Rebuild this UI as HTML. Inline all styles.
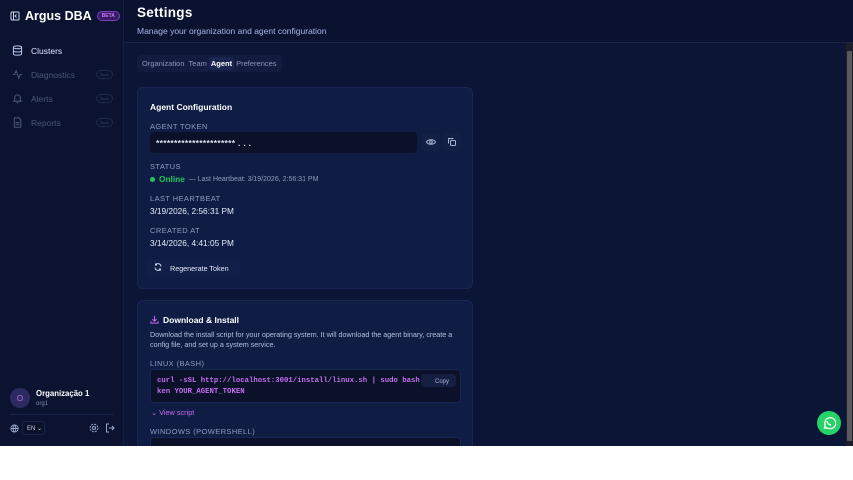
<!DOCTYPE html>
<html><head><meta charset="utf-8"><style>
*{box-sizing:border-box;margin:0;padding:0}
body{width:853px;height:480px;background:#fff;font-family:"Liberation Sans",sans-serif;overflow:hidden;position:relative}
.app{position:absolute;left:0;top:0;width:853px;height:446px;background:#0b1535;overflow:hidden}
.side{position:absolute;left:0;top:0;width:124px;height:446px;background:#0b1330;border-right:1px solid #141f42}
.logo{position:absolute;left:10px;top:9px;display:flex;align-items:center;gap:5px;color:#fff;font-weight:bold;font-size:12.5px;white-space:nowrap}
.beta{font-size:5px;color:#c07af0;border:1px solid #7b3fc0;background:#3a1a66;border-radius:6px;padding:1px 4px}
.nav{position:absolute;left:12px;display:flex;align-items:center;gap:8px;font-size:8.5px;width:100px}
.soon{position:absolute;left:84px;font-size:4px;color:#3f4a6a;border:1px solid #1f2a4a;border-radius:5px;padding:1px 3px}
.main{position:absolute;left:124px;top:0;right:0;height:446px}
.hdr{height:43px;background:#0a1230;border-bottom:1px solid #18244a;padding:5px 13px}
.hdr h1{color:#fff;font-size:13.5px;font-weight:bold;letter-spacing:.3px}
.hdr p{color:#a9b6e6;font-size:8.5px;margin-top:6px}
.tabs{position:absolute;left:13px;top:55px;background:#111c3e;border-radius:4px;height:17px;display:flex;align-items:center;padding:0 3px;font-size:7.5px;color:#8d97b8;white-space:nowrap}
.tabs span{padding:2px 2px}
.tabs .on{background:#1a2650;color:#fff;font-weight:bold;border-radius:3px}
.card{position:absolute;left:13px;width:336px;background:#0f1d45;border:1px solid #172654;border-radius:6px;color:#e6ebf8}
.lbl{position:absolute;left:12px;font-size:7.5px;color:#8f9bc0;letter-spacing:.4px}
.val{position:absolute;left:12px;font-size:8.3px;color:#e6ebf8}
.scroll{position:absolute;right:0;top:43px;width:7px;height:403px;background:#1c1f2a}
</style></head><body><div class="app">
<div class="side">
 <div class="logo"><svg width="10" height="10" viewBox="0 0 10 10"><rect x="1" y="1" width="8" height="8" rx="1" fill="none" stroke="#cfd6ea" stroke-width="1"/><line x1="3.5" y1="1" x2="3.5" y2="9" stroke="#cfd6ea"/><path d="M6.5 3.5L5 5l1.5 1.5" fill="none" stroke="#cfd6ea"/></svg>Argus DBA <span class="beta">BETA</span></div>
 <div class="nav" style="top:45px;color:#dfe6ff"><svg width="11" height="11" viewBox="0 0 12 12" fill="none" stroke="#b9c4ea" stroke-width="1.1"><ellipse cx="6" cy="2.5" rx="4.5" ry="1.6"/><path d="M1.5 2.5v7c0 1 2 1.6 4.5 1.6s4.5-.6 4.5-1.6v-7M1.5 6c0 1 2 1.6 4.5 1.6s4.5-.6 4.5-1.6"/></svg>Clusters</div>
 <div class="nav" style="top:69px;color:#4d5778"><svg width="11" height="11" viewBox="0 0 12 12" fill="none" stroke="#4d5778" stroke-width="1.1"><path d="M1 6h2l1.5-4 3 8 1.5-4h2"/></svg>Diagnostics<span class="soon">Soon</span></div>
 <div class="nav" style="top:93px;color:#4d5778"><svg width="11" height="11" viewBox="0 0 12 12" fill="none" stroke="#4d5778" stroke-width="1.1"><path d="M3 8V5a3 3 0 016 0v3l1 1H2zM5 10.5h2"/></svg>Alerts<span class="soon">Soon</span></div>
 <div class="nav" style="top:117px;color:#4d5778"><svg width="11" height="11" viewBox="0 0 12 12" fill="none" stroke="#4d5778" stroke-width="1.1"><path d="M2.5 1h5l2 2v8h-7zM4 6h4M4 8h4"/></svg>Reports<span class="soon">Soon</span></div>
 <div style="position:absolute;left:10px;top:388px;width:20px;height:20px;border-radius:50%;background:#2c2a60;color:#c070f0;font-size:8px;display:flex;align-items:center;justify-content:center">O</div>
 <div style="position:absolute;left:36px;top:389px;color:#fff;font-size:7.8px;font-weight:bold">Organização 1</div>
 <div style="position:absolute;left:36px;top:401px;color:#7f8ab0;font-size:6px">org1</div>
 <div style="position:absolute;left:10px;top:414px;width:104px;border-top:1px solid #18244a"></div>
 <svg style="position:absolute;left:10px;top:424px" width="9" height="9" viewBox="0 0 10 10" fill="none" stroke="#9aa6cc"><circle cx="5" cy="5" r="4"/><path d="M1 5h8M5 1c-2 2-2 6 0 8M5 1c2 2 2 6 0 8"/></svg>
 <div style="position:absolute;left:22px;top:421px;width:23px;height:14px;background:#0a1128;border:1px solid #18244a;border-radius:3px;color:#cfd6ea;font-size:6px;padding:3px 0 0 4px">EN &#8964;</div>
 <svg style="position:absolute;left:89px;top:423px" width="10" height="10" viewBox="0 0 10 10" fill="none" stroke="#9aa6cc"><circle cx="5" cy="5" r="1.5"/><circle cx="5" cy="5" r="3.8" stroke-dasharray="2 1"/></svg>
 <svg style="position:absolute;left:105px;top:423px" width="10" height="10" viewBox="0 0 10 10" fill="none" stroke="#9aa6cc"><path d="M4 1H1.5v8H4M4 5h5M7 3l2 2-2 2"/></svg>
</div>
<div class="main">
 <div class="hdr"><h1>Settings</h1><p>Manage your organization and agent configuration</p></div>
 <div class="tabs"><span>Organization</span><span>Team</span><span class="on">Agent</span><span>Preferences</span></div>
 <div class="card" style="top:87px;height:202px">
  <div style="position:absolute;left:12px;top:14px;font-size:8.5px;font-weight:bold;color:#fff">Agent Configuration</div>
  <div class="lbl" style="top:34px">AGENT TOKEN</div>
  <div style="position:absolute;left:12px;top:44px;width:267px;height:21px;background:#0a1128;border-radius:4px;color:#dfe4f2;font-size:8.5px;padding:6px 6px;font-weight:bold;letter-spacing:.3px">**********************&nbsp;. . .</div>
  <div style="position:absolute;left:284px;top:45px;width:18px;height:18px;background:#122046;border-radius:4px"><svg style="margin:5px 4px" width="10" height="8" viewBox="0 0 10 8" fill="none" stroke="#aab4d4"><path d="M.5 4C2 1 8 1 9.5 4 8 7 2 7 .5 4z"/><circle cx="5" cy="4" r="1.3"/></svg></div>
  <div style="position:absolute;left:305px;top:45px;width:18px;height:18px;background:#122046;border-radius:4px"><svg style="margin:5px" width="8" height="8" viewBox="0 0 8 8" fill="none" stroke="#aab4d4"><rect x="2.5" y="2.5" width="5" height="5" rx="1"/><path d="M.5 5.5V.5h5"/></svg></div>
  <div class="lbl" style="top:74px">STATUS</div>
  <div style="position:absolute;left:12px;top:86px;font-size:8.3px;display:flex;align-items:center;gap:4px"><span style="width:5px;height:5px;border-radius:50%;background:#22c55e;display:inline-block"></span><span style="color:#22c55e;font-weight:bold">Online</span><span style="color:#8f9bc0;font-size:7px">— Last Heartbeat: 3/19/2026, 2:56:31 PM</span></div>
  <div class="lbl" style="top:106px">LAST HEARTBEAT</div>
  <div class="val" style="top:118px">3/19/2026, 2:56:31 PM</div>
  <div class="lbl" style="top:138px">CREATED AT</div>
  <div class="val" style="top:150px">3/14/2026, 4:41:05 PM</div>
  <div style="position:absolute;left:8px;top:171px;width:94px;height:17px;background:#111f48;border-radius:4px;font-size:7.2px;color:#e6ebf8;padding:5px 0 0 24px;white-space:nowrap">Regenerate Token<svg style="position:absolute;left:8px;top:4px" width="8" height="8" viewBox="0 0 8 8" fill="none" stroke="#cfd6ea"><path d="M7 3.5A3 3 0 001.5 2M1 4.5A3 3 0 006.5 6M1.5.5V2H3M6.5 7.5V6H5"/></svg></div>
 </div>
 <div class="card" style="top:300px;height:160px">
  <svg style="position:absolute;left:12px;top:14px" width="9" height="9" viewBox="0 0 10 10" fill="none" stroke="#c46df0" stroke-width="1.1"><path d="M5 1v6M2.5 4.5L5 7l2.5-2.5M1 7v2h8V7"/></svg>
  <div style="position:absolute;left:25px;top:14px;font-size:8.5px;font-weight:bold;color:#fff">Download &amp; Install</div>
  <div style="position:absolute;left:12px;top:29px;width:312px;font-size:7.2px;line-height:10px;color:#b5bfdf">Download the install script for your operating system. It will download the agent binary, create a config file, and set up a system service.</div>
  <div class="lbl" style="top:58px">LINUX (BASH)</div>
  <div style="position:absolute;left:12px;top:68px;width:311px;height:34px;background:#0a1128;border:1px solid #172654;border-radius:4px;font-family:'Liberation Mono',monospace;font-size:7.3px;line-height:11px;color:#c56ef2;padding:6px 6px;font-weight:bold;white-space:nowrap;overflow:hidden">curl -sSL http://localhost:3001/install/linux.sh | sudo bash -s<br>ken YOUR_AGENT_TOKEN
   <div style="position:absolute;right:4px;top:4px;width:35px;height:13px;background:#141f42;border-radius:3px;font-family:'Liberation Sans',sans-serif;font-weight:normal;color:#aab4d4;font-size:6px;padding:3px 0 0 14px">Copy</div></div>
  <div style="position:absolute;left:13px;top:107px;font-size:7.3px;color:#c56ef2">&#8964; View script</div>
  <div class="lbl" style="top:126px">WINDOWS (POWERSHELL)</div>
  <div style="position:absolute;left:12px;top:136px;width:311px;height:30px;background:#0a1128;border:1px solid #172654;border-radius:4px"></div>
 </div>
 <div class="scroll"><div style="position:absolute;left:1px;top:8px;width:5px;height:390px;background:#5a5a5a;border-radius:1px"></div></div>
 <div style="position:absolute;left:693px;top:411px;width:24px;height:24px;border-radius:50%;background:#25d366"><svg style="margin:5px" width="14" height="14" viewBox="0 0 14 14" fill="none" stroke="#fff" stroke-width="1.3"><path d="M2.5 12l.8-2.5A5.5 5.5 0 117 12.5a5.5 5.5 0 01-2.5-.7z"/><path d="M5 5c0 2 2 4 4 4" stroke-width="1.5"/></svg></div>
</div>
</div></body></html>
